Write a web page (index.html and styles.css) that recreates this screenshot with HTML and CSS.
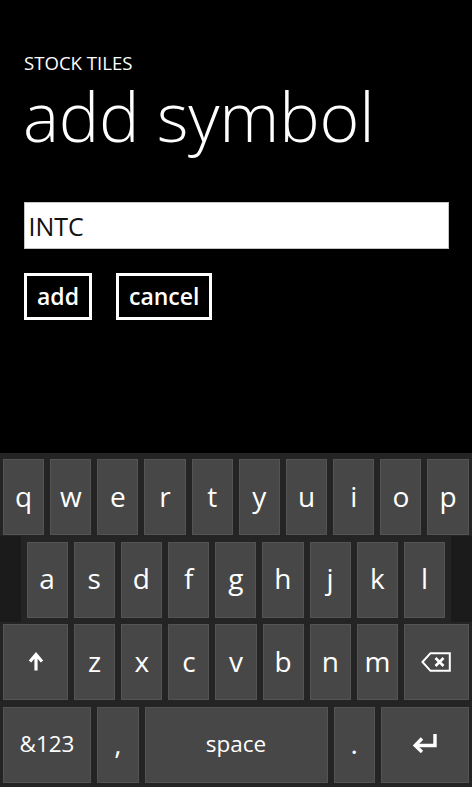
FILE: index.html
```html
<!DOCTYPE html>
<html>
<head>
<meta charset="utf-8">
<link rel="stylesheet" href="styles.css">
</head>
<body>
<div class="screen">
  <div class="page">
    <div class="app-name">STOCK TILES</div>
    <div class="page-title">add symbol</div>
    <div class="textbox">INTC</div>
    <div class="buttons">
      <div class="btn">add</div>
      <div class="btn">cancel</div>
    </div>
  </div>
  <div class="keyboard">
    <div class="row row1">
      <div class="key">q</div><div class="key">w</div><div class="key">e</div><div class="key">r</div><div class="key">t</div><div class="key">y</div><div class="key">u</div><div class="key">i</div><div class="key">o</div><div class="key">p</div>
    </div>
    <div class="row row2">
      <div class="side side-left"></div>
      <div class="key">a</div><div class="key">s</div><div class="key">d</div><div class="key">f</div><div class="key">g</div><div class="key">h</div><div class="key">j</div><div class="key">k</div><div class="key">l</div>
      <div class="side side-right"></div>
    </div>
    <div class="row row3">
      <div class="key wide">
        <svg width="16" height="19" viewBox="0 0 16 19"><path d="M8 18.5V3.5M2 9.5L8 2.5L14 9.5" fill="none" stroke="#fff" stroke-width="3.2"/></svg>
      </div>
      <div class="key">z</div><div class="key">x</div><div class="key">c</div><div class="key">v</div><div class="key">b</div><div class="key">n</div><div class="key">m</div>
      <div class="key wide">
        <svg width="30" height="20" viewBox="0 0 30 20"><path d="M1.5 10L9.5 1.2H28.8V18.8H9.5Z" fill="none" stroke="#fff" stroke-width="2" stroke-linejoin="miter"/><path d="M14.5 6L22.5 14M22.5 6L14.5 14" fill="none" stroke="#fff" stroke-width="2.6"/></svg>
      </div>
    </div>
    <div class="row row4">
      <div class="key fn small">&amp;123</div>
      <div class="key punct">,</div>
      <div class="key space small">space</div>
      <div class="key punct">.</div>
      <div class="key fn">
        <svg width="26" height="19" viewBox="0 0 26 19"><path d="M23 0V11.5H4" fill="none" stroke="#fff" stroke-width="3.4"/><path d="M10 4.5L3.2 11.5L10 18" fill="none" stroke="#fff" stroke-width="3.4"/></svg>
      </div>
    </div>
  </div>
</div>
</body>
</html>
```

FILE: styles.css
```css
html, body {
  margin: 0;
  padding: 0;
  background: #000;
}

body {
  font-family: "Open Sans", "Noto Sans", sans-serif;
  color: #fff;
}

.screen {
  width: 472px;
  height: 787px;
  display: flex;
  flex-direction: column;
  overflow: hidden;
}

.page {
  flex: 1;
  padding: 51px 23px 0 24px;
}

.app-name {
  font-size: 18.6px;
  line-height: 24px;
  font-weight: 400;
}

.page-title {
  margin-top: 1px;
  font-size: 68px;
  line-height: 80px;
  font-weight: 300;
  letter-spacing: -0.2px;
  margin-left: -1px;
}

.textbox {
  margin-top: 46px;
  width: 419px;
  height: 45px;
  background: #fff;
  border: 1px solid #c4c4c4;
  color: #111;
  font-size: 25px;
  display: flex;
  align-items: center;
  padding-left: 4px;
  box-sizing: content-box;
  margin-left: -0.5px;
}

.buttons {
  margin-top: 23.5px;
  display: flex;
  gap: 24px;
}

.btn {
  height: 41px;
  border: 3px solid #fff;
  padding: 0 10px;
  font-size: 23px;
  font-weight: 600;
  display: flex;
  align-items: center;
  justify-content: center;
  min-width: 41px;
}

.keyboard {
  height: 334px;
  background: #242424;
  box-sizing: border-box;
  padding: 6px 0 4px 0;
  display: grid;
  grid-template-rows: repeat(4, 1fr);
  row-gap: 6.5px;
}

.row {
  display: flex;
  gap: 6px;
}

.row1 {
  padding: 0 3.5px 0 3px;
}

.row2 {
  padding: 0;
}

.row3, .row4 {
  padding: 0 3px;
}

.side {
  background: #1b1b1b;
  margin: -6px 0 -4px 0;
}

.side-left {
  width: 20.5px;
}

.side-right {
  width: 21px;
}

.key {
  flex: 1;
  min-width: 0;
  background: #474747;
  border: 1px solid #545454;
  box-sizing: border-box;
  display: flex;
  align-items: center;
  justify-content: center;
  font-size: 28px;
  font-weight: 500;
  color: #fff;
  padding-bottom: 3px;
}

.key.wide {
  flex: 0 0 65px;
  padding-bottom: 1px;
}

.key.fn {
  flex: 0 0 88px;
}

.key.punct {
  flex: 0 0 41.5px;
}

.key.small {
  font-size: 22.5px;
}

.key svg {
  display: block;
}
```
